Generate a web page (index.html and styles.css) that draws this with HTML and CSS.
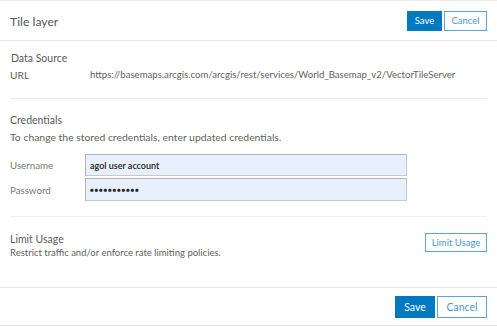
FILE: index.html
```html
<!DOCTYPE html>
<html>
<head>
<meta charset="utf-8">
<link rel="stylesheet" href="styles.css">
</head>
<body>
<div class="dialog">
  <div class="header">
    <div class="title">Tile layer</div>
    <div class="actions">
      <button class="btn btn-primary small">Save</button>
      <button class="btn btn-secondary small">Cancel</button>
    </div>
  </div>
  <div class="content">
    <div class="section source">
      <div class="label">Data Source</div>
      <div class="row">
        <div class="key">URL</div>
        <div class="value">https://basemaps.arcgis.com/arcgis/rest/services/World_Basemap_v2/VectorTileServer</div>
      </div>
    </div>
    <div class="section creds">
      <div class="label">Credentials</div>
      <div class="desc big">To change the stored credentials, enter updated credentials.</div>
      <div class="fields">
        <div class="field">
          <div class="key">Username</div>
          <div class="input">agol user account</div>
        </div>
        <div class="field">
          <div class="key">Password</div>
          <div class="input pw">●●●●●●●●●●●</div>
        </div>
      </div>
    </div>
    <div class="section limit">
      <div class="limit-text">
        <div class="label">Limit Usage</div>
        <div class="desc">Restrict traffic and/or enforce rate limiting policies.</div>
      </div>
      <button class="btn btn-secondary limit-btn">Limit Usage</button>
    </div>
  </div>
  <div class="footer">
    <button class="btn btn-primary large save">Save</button>
    <button class="btn btn-secondary large cancel">Cancel</button>
  </div>
</div>
</body>
</html>
```
FILE: styles.css
```css
* { box-sizing: border-box; }
html, body { margin: 0; padding: 0; background: #fff; }
body {
  font-family: Lato, "Noto Sans", sans-serif;
  color: #555;
  width: 497px;
  height: 327px;
  overflow: hidden;
}
.dialog {
  border-top: 1px solid #ececec;
  display: flex;
  flex-direction: column;
}
.header {
  height: 40px;
  border-bottom: 1px solid #e8e8e8;
  padding: 0 10px;
  display: flex;
  align-items: center;
  justify-content: space-between;
}
.title {
  font-size: 12.2px;
  color: #555;
  padding-top: 1px;
}
.actions { display: flex; gap: 2px; }
.btn {
  font-family: Lato, "Noto Sans", sans-serif;
  font-size: 9.5px;
  border: 1px solid #0079c1;
  padding: 0;
  margin: 0;
  cursor: pointer;
}
.btn-primary { background: #0079c1; color: #fff; }
.btn-secondary { background: #fff; color: #4a98cf; border-color: #5aa6d9; }
.small { height: 20px; }
.actions .btn-primary { width: 35px; }
.actions .btn-secondary { width: 43px; }
.content { padding: 0 10px; }
.section { border-bottom: 1px solid #ededed; }
.label { font-size: 10.5px; line-height: 14px; color: #5a5a5a; }
.key { font-size: 9.7px; line-height: 14px; color: #5f5f5f; }
.source { height: 58px; padding-top: 10px; }
.source .label { padding-left: 1px; }
.row { display: flex; margin-top: 3px; }
.row .key { width: 80px; font-size: 10.2px; }
.value { font-size: 9.6px; line-height: 14px; color: #5f5f5f; }
.creds { height: 118px; padding-top: 14px; }
.desc { font-size: 9.5px; line-height: 14px; color: #5f5f5f; }
.desc.big { font-size: 10.4px; margin-top: 3px; }
.fields { display: flex; flex-direction: column; gap: 2px; margin-top: 10px; }
.field { display: flex; align-items: center; }
.field .key { width: 75px; color: #777; }
.input {
  width: 322px;
  height: 22px;
  background: #e8f0fe;
  border: 1px solid #c8c8c8;
  border-top-color: #b4b4b4;
  border-left-color: #b4b4b4;
  font-family: Lato, "Noto Sans", sans-serif;
  font-size: 9px;
  font-weight: 600;
  color: #222;
  display: flex;
  align-items: center;
  padding-left: 4px;
}
.field:last-child .input { height: 23px; }
.input.pw { font-size: 6.5px; letter-spacing: 0.6px; font-weight: 400; }
.limit {
  height: 70px;
  border-bottom: none;
  display: flex;
  justify-content: space-between;
  align-items: flex-start;
  padding-top: 15px;
}
.limit-text .desc { margin-top: 0; }
.limit-btn { width: 62px; height: 19px; margin-top: 1px; }
.footer {
  border-top: 1px solid #e8e8e8;
  border-bottom: 1px solid #e8e8e8;
  height: 39px;
  display: flex;
  justify-content: flex-end;
  align-items: center;
  gap: 2px;
  padding: 0 10px;
}
.large { height: 22px; font-size: 10.5px; }
.save { width: 40px; }
.cancel { width: 50px; }
```
